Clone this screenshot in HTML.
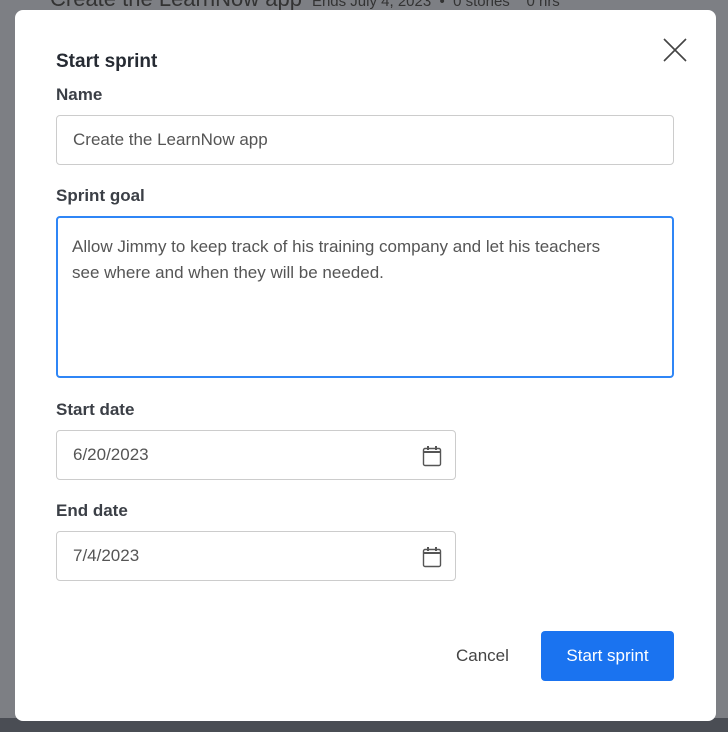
<!DOCTYPE html>
<html><head><style>
body{margin:0;width:728px;height:732px;background:#7d7f84;font-family:"Liberation Sans",sans-serif;position:relative;overflow:hidden}
.bot{position:absolute;left:0;top:718px;width:728px;height:14px;background:#4a4d54}
.top{position:absolute;left:50px;top:-14px;color:#333;font-size:22px;white-space:nowrap}
.top span{font-size:15px;margin-left:10px}
.m{position:absolute;left:15px;top:10px;width:701px;height:711px;background:#fff;border-radius:8px}
.h{position:absolute;left:41px;top:41px;font-size:19px;font-weight:bold;color:#262b33}
.x{position:absolute;left:648px;top:28px}
.l{position:absolute;left:41px;font-size:17px;font-weight:bold;color:#3b3f46}
.in{position:absolute;left:41px;border:1px solid #ccc;border-radius:4px;box-sizing:border-box;color:#555;font-size:17px;padding-left:16px}
.ta{border:2px solid #2f86f6;padding:16px 40px 16px 14px;line-height:26px}
.cal{position:absolute;right:13px;top:14px}
.c{position:absolute;left:441px;top:636px;font-size:17px;color:#444}
.b{position:absolute;left:526px;top:621px;width:133px;height:50px;background:#1a73f0;border-radius:4px;color:#fff;font-size:17px;text-align:center;line-height:50px}
</style></head><body>
<div class="top">Create the LearnNow app<span>Ends July 4, 2023 &nbsp;•&nbsp; 0 stories &nbsp;&nbsp; 0 hrs</span></div>
<div class="bot"></div>
<div class="m">
<div class="h">Start sprint</div>
<svg class="x" width="24" height="24" viewBox="0 0 24 24"><path d="M1 1L23 23M23 1L1 23" stroke="#444" stroke-width="1.6"/></svg>
<div class="l" style="top:75px">Name</div>
<div class="in" style="top:105px;width:618px;height:50px;line-height:48px">Create the LearnNow app</div>
<div class="l" style="top:176px">Sprint goal</div>
<div class="in ta" style="top:206px;width:618px;height:162px">Allow Jimmy to keep track of his training company and let his teachers see where and when they will be needed.</div>
<div class="l" style="top:390px">Start date</div>
<div class="in" style="top:420px;width:400px;height:50px;line-height:48px">6/20/2023<svg class="cal" width="20" height="22" viewBox="0 0 20 22"><rect x="1.5" y="3.5" width="17" height="17" rx="1.5" fill="none" stroke="#555" stroke-width="1.4"/><path d="M2 7h16M6 1v4M14 1v4" stroke="#555" stroke-width="2"/></svg></div>
<div class="l" style="top:491px">End date</div>
<div class="in" style="top:521px;width:400px;height:50px;line-height:48px">7/4/2023<svg class="cal" width="20" height="22" viewBox="0 0 20 22"><rect x="1.5" y="3.5" width="17" height="17" rx="1.5" fill="none" stroke="#555" stroke-width="1.4"/><path d="M2 7h16M6 1v4M14 1v4" stroke="#555" stroke-width="2"/></svg></div>
<div class="c">Cancel</div>
<div class="b">Start sprint</div>
</div>
</body></html>
